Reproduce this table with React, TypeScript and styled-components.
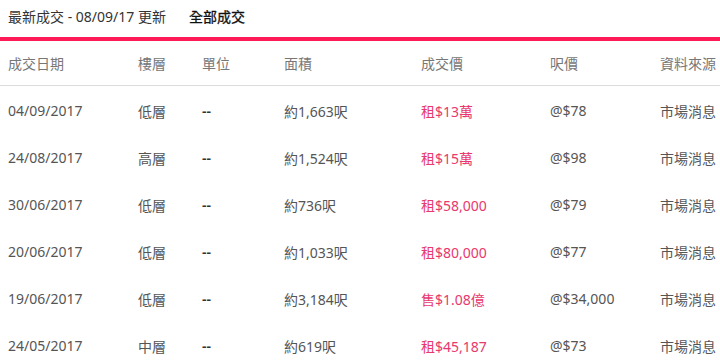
import styled, { createGlobalStyle } from "styled-components";

const GlobalStyle = createGlobalStyle`
  body {
    margin: 0;
    background: #fff;
    font-family: "Noto Sans", "Noto Sans CJK TC", sans-serif;
  }
`;

const Wrapper = styled.div`
  width: 720px;
  overflow: hidden;
`;

const TabBar = styled.div`
  display: flex;
  align-items: center;
  gap: 23px;
  height: 32px;
  padding: 0 8px 5px;
  border-bottom: 4px solid #fd1a57;
`;

const Tab = styled.span<{ $active?: boolean }>`
  font-size: 14px;
  color: ${(p) => (p.$active ? "#111" : "#333")};
  font-weight: 400;
  -webkit-text-stroke: ${(p) => (p.$active ? "0.3px #111" : "0")};
`;

const Row = styled.div<{ $head?: boolean }>`
  display: grid;
  grid-template-columns: 130px 64px 82px 137px 129px 110px 1fr;
  align-items: center;
  padding-left: 8px;
  height: ${(p) => (p.$head ? "44px" : "47px")};
  font-size: 14px;
  color: ${(p) => (p.$head ? "#777" : "#555")};
  border-bottom: ${(p) => (p.$head ? "1px solid #dcdcdc" : "none")};
  white-space: nowrap;
`;

const Body = styled.div`
  padding-top: 1px;
`;

const Price = styled.span`
  color: #e8386d;
`;

const Dash = styled.span`
  color: #333;
  font-weight: 600;
`;

const headers = ["成交日期", "樓層", "單位", "面積", "成交價", "呎價", "資料來源"];

const deals = [
  { date: "04/09/2017", floor: "低層", area: "約1,663呎", price: "租$13萬", unit: "@$78" },
  { date: "24/08/2017", floor: "高層", area: "約1,524呎", price: "租$15萬", unit: "@$98" },
  { date: "30/06/2017", floor: "低層", area: "約736呎", price: "租$58,000", unit: "@$79" },
  { date: "20/06/2017", floor: "低層", area: "約1,033呎", price: "租$80,000", unit: "@$77" },
  { date: "19/06/2017", floor: "低層", area: "約3,184呎", price: "售$1.08億", unit: "@$34,000" },
  { date: "24/05/2017", floor: "中層", area: "約619呎", price: "租$45,187", unit: "@$73" },
];

function App() {
  return (
    <>
      <GlobalStyle />
      <Wrapper>
        <TabBar>
          <Tab>最新成交 - 08/09/17 更新</Tab>
          <Tab $active>全部成交</Tab>
        </TabBar>
        <Row $head>
          {headers.map((h) => (
            <span key={h}>{h}</span>
          ))}
        </Row>
        <Body>
          {deals.map((d) => (
            <Row key={d.date + d.area}>
              <span>{d.date}</span>
              <span>{d.floor}</span>
              <Dash>--</Dash>
              <span>{d.area}</span>
              <Price>{d.price}</Price>
              <span>{d.unit}</span>
              <span>市場消息</span>
            </Row>
          ))}
        </Body>
      </Wrapper>
    </>
  );
}

export default App;
